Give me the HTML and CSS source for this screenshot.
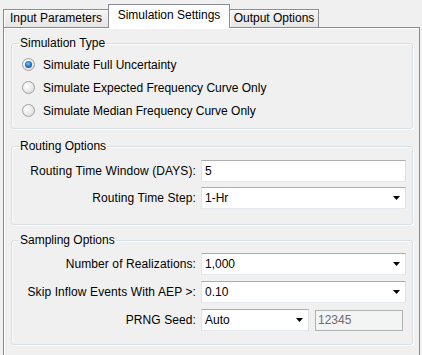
FILE: index.html
```html
<!DOCTYPE html>
<html lang="en">
<head>
    <meta charset="UTF-8">
    <title>Simulation Settings</title>
    <link rel="stylesheet" href="styles.css">
</head>
<body>
<div class="window">
    <!-- Pestañas -->
    <div class="tabs">
        <div class="tab tab-input">Input Parameters</div>
        <div class="tab tab-sim active">Simulation Settings</div>
        <div class="tab tab-output">Output Options</div>
    </div>

    <div class="panel">
        <fieldset class="group sim-type">
            <legend>Simulation Type</legend>
            <div class="option"><span class="radio checked"></span>Simulate Full Uncertainty</div>
            <div class="option"><span class="radio"></span>Simulate Expected Frequency Curve Only</div>
            <div class="option"><span class="radio"></span>Simulate Median Frequency Curve Only</div>
        </fieldset>

        <fieldset class="group routing">
            <legend>Routing Options</legend>
            <div class="form-grid">
                <label>Routing Time Window (DAYS):</label>
                <input class="field" type="text" value="5">
                <label>Routing Time Step:</label>
                <div class="combo"><span>1-Hr</span><i class="arrow"></i></div>
            </div>
        </fieldset>

        <fieldset class="group sampling">
            <legend>Sampling Options</legend>
            <div class="form-grid">
                <label>Number of Realizations:</label>
                <div class="combo"><span>1,000</span><i class="arrow"></i></div>
                <label>Skip Inflow Events With AEP &gt;:</label>
                <div class="combo"><span>0.10</span><i class="arrow"></i></div>
                <label>PRNG Seed:</label>
                <div class="seed">
                    <div class="combo short"><span>Auto</span><i class="arrow"></i></div>
                    <input class="field disabled" type="text" value="12345" disabled>
                </div>
            </div>
        </fieldset>
    </div>
</div>
</body>
</html>
```

FILE: styles.css
```css
body {
    margin: 0;
    background: #f0f0f0;
    font-family: "Liberation Sans", Arial, sans-serif;
    font-size: 12px;
    color: #000;
}

.window {
    padding: 0 2px 0 3px;
    height: 355px;
    overflow: hidden;
}

/* Pestañas */
.tabs {
    display: flex;
    align-items: flex-end;
    height: 27px;
}

.tab {
    box-sizing: border-box;
    height: 18px;
    line-height: 16px;
    text-align: center;
    border: 1px solid #898c95;
    border-bottom: none;
    background: linear-gradient(#f4f4f4, #e6e6e6);
    box-shadow: inset 1px 1px 0 #fff;
}

.tab-input {
    width: 106px;
}

.tab-sim {
    width: 122px;
    margin-left: -1px;
}

.tab-output {
    width: 90px;
    margin-left: -1px;
}

.tab.active {
    position: relative;
    z-index: 1;
    height: 24px;
    line-height: 21px;
    margin-bottom: -1px;
    background: #fff;
    box-shadow: none;
}

.panel {
    border: 1px solid #898c95;
    box-shadow: inset 1px 1px 0 #fff;
    padding: 8px 6px 20px 7px;
    min-height: 400px;
}

/* Grupos */
.group {
    margin: 0 0 10px;
    padding: 3px 6px 6px 8px;
    border: 1px solid #d5dfe5;
    border-radius: 3px;
    box-shadow: inset 1px 1px 0 #fff, 1px 1px 0 #fff;
    min-width: 0;
}

.group legend {
    padding: 0 1px;
    margin-left: -1px;
    line-height: 14px;
}

.routing {
    margin-bottom: 8px;
    padding-top: 7px;
    padding-bottom: 15px;
}

.sampling {
    padding-top: 6px;
    padding-bottom: 13px;
}

.option {
    display: flex;
    align-items: center;
    gap: 8px;
    height: 23px;
    padding-left: 2px;
}

.radio {
    position: relative;
    width: 11px;
    height: 11px;
    border: 1px solid #a2a2a2;
    border-radius: 50%;
    background: radial-gradient(circle at 35% 35%, #fff, #e0e0e0 75%);
}

.radio.checked::after {
    content: "";
    position: absolute;
    left: 2px;
    top: 2px;
    width: 7px;
    height: 7px;
    border-radius: 50%;
    background: radial-gradient(circle at 45% 40%, #7cc8f8, #2a78c8 45%, #103e78);
}

/* Formularios */
.form-grid {
    display: grid;
    grid-template-columns: 176px 1fr;
    column-gap: 5px;
    row-gap: 5px;
    align-items: center;
}

.sampling .form-grid {
    row-gap: 6px;
}

.form-grid label {
    text-align: right;
    white-space: nowrap;
    letter-spacing: 0.1px;
}

.field,
.combo {
    box-sizing: border-box;
    width: 100%;
    height: 22px;
    margin: 0;
    border: 1px solid;
    border-color: #abadb3 #dbdfe6 #e3e9ef #e2e3ea;
    background: #fff;
    font: inherit;
    color: #000;
    padding: 0 3px;
    outline: none;
}

.combo {
    display: flex;
    align-items: center;
    justify-content: space-between;
    padding: 0 5px 0 3px;
}

.arrow {
    width: 7px;
    height: 4px;
    background: #000;
    clip-path: polygon(0 0, 100% 0, 50% 100%);
}

.seed {
    display: flex;
    align-items: center;
    gap: 6px;
}

.combo.short {
    width: 108px;
    flex: none;
}

.field.disabled {
    width: 88px;
    height: 21px;
    padding: 0 2px;
    background: #f4f4f4;
    border-color: #adb2b5;
    color: #6d6d6d;
}
```
